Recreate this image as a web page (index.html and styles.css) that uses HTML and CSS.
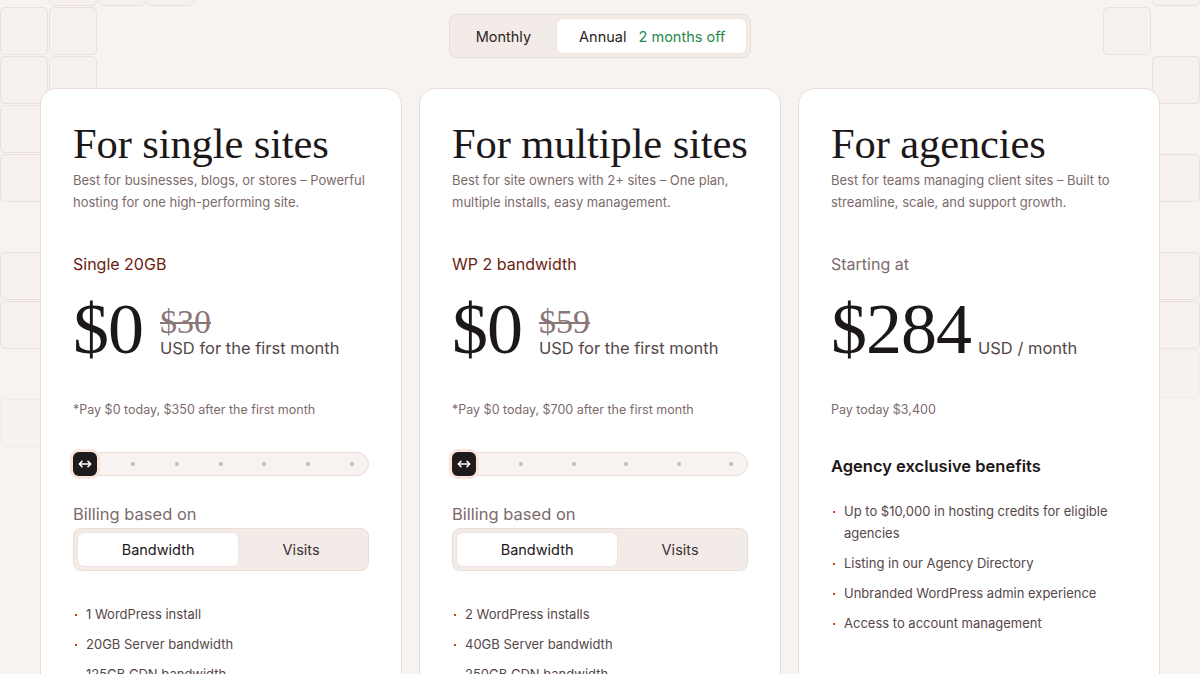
FILE: index.html
```html
<!DOCTYPE html>
<html lang="en">
<head>
<meta charset="utf-8">
<title>Pricing</title>
<link rel="stylesheet" href="styles.css">
</head>
<body>
<div class="bg-grid bg-left">
  <span class="tile" style="grid-column:2;grid-row:1"></span>
  <span class="tile" style="grid-column:3;grid-row:1"></span>
  <span class="tile" style="grid-column:4;grid-row:1"></span>
  <span class="tile" style="grid-column:1;grid-row:2"></span>
  <span class="tile" style="grid-column:2;grid-row:2"></span>
  <span class="tile" style="grid-column:1;grid-row:3"></span>
  <span class="tile" style="grid-column:2;grid-row:3"></span>
  <span class="tile" style="grid-column:1;grid-row:4"></span>
  <span class="tile" style="grid-column:1;grid-row:5"></span>
  <span class="tile" style="grid-column:1;grid-row:7"></span>
  <span class="tile" style="grid-column:1;grid-row:8"></span>
  <span class="tile faint" style="grid-column:1;grid-row:10"></span>
</div>
<div class="bg-grid bg-right">
  <span class="tile" style="grid-column:2;grid-row:1"></span>
  <span class="tile" style="grid-column:1;grid-row:2"></span>
  <span class="tile" style="grid-column:2;grid-row:3"></span>
  <span class="tile" style="grid-column:2;grid-row:5"></span>
  <span class="tile" style="grid-column:2;grid-row:7"></span>
  <span class="tile" style="grid-column:2;grid-row:8"></span>
  <span class="tile faint" style="grid-column:2;grid-row:9"></span>
</div>

<main class="page">
  <div class="period-toggle">
    <button class="period-opt">Monthly</button>
    <button class="period-opt active">Annual <span class="save">2 months off</span></button>
  </div>

  <section class="cards">
    <article class="card">
      <h2 class="card-title">For single sites</h2>
      <p class="card-desc">Best for businesses, blogs, or stores – Powerful hosting for one high-performing site.</p>
      <div class="plan-name">Single 20GB</div>
      <div class="price-row">
        <span class="price">$0</span>
        <div class="price-meta">
          <span class="old-price">$30</span>
          <span class="price-unit">USD for the first month</span>
        </div>
      </div>
      <p class="price-note">*Pay $0 today, $350 after the first month</p>
      <div class="slider">
        <span class="handle"><svg width="14" height="8" viewBox="0 0 14 8"><path d="M1.5 4h11M4 1.3L1.3 4 4 6.7M10 1.3L12.7 4 10 6.7" fill="none" stroke="#fff" stroke-width="1.6" stroke-linecap="round" stroke-linejoin="round"/></svg></span>
        <div class="dots dots-6"><i></i><i></i><i></i><i></i><i></i><i></i></div>
      </div>
      <div class="billing-label">Billing based on</div>
      <div class="seg">
        <button class="seg-opt active">Bandwidth</button>
        <button class="seg-opt">Visits</button>
      </div>
      <ul class="features">
        <li>1 WordPress install</li>
        <li>20GB Server bandwidth</li>
        <li>125GB CDN bandwidth</li>
      </ul>
    </article>

    <article class="card">
      <h2 class="card-title">For multiple sites</h2>
      <p class="card-desc">Best for site owners with 2+ sites – One plan, multiple installs, easy management.</p>
      <div class="plan-name">WP 2 bandwidth</div>
      <div class="price-row">
        <span class="price">$0</span>
        <div class="price-meta">
          <span class="old-price">$59</span>
          <span class="price-unit">USD for the first month</span>
        </div>
      </div>
      <p class="price-note">*Pay $0 today, $700 after the first month</p>
      <div class="slider">
        <span class="handle"><svg width="14" height="8" viewBox="0 0 14 8"><path d="M1.5 4h11M4 1.3L1.3 4 4 6.7M10 1.3L12.7 4 10 6.7" fill="none" stroke="#fff" stroke-width="1.6" stroke-linecap="round" stroke-linejoin="round"/></svg></span>
        <div class="dots dots-5"><i></i><i></i><i></i><i></i><i></i></div>
      </div>
      <div class="billing-label">Billing based on</div>
      <div class="seg">
        <button class="seg-opt active">Bandwidth</button>
        <button class="seg-opt">Visits</button>
      </div>
      <ul class="features">
        <li>2 WordPress installs</li>
        <li>40GB Server bandwidth</li>
        <li>250GB CDN bandwidth</li>
      </ul>
    </article>

    <article class="card">
      <h2 class="card-title">For agencies</h2>
      <p class="card-desc">Best for teams managing client sites – Built to streamline, scale, and support growth.</p>
      <div class="plan-name muted">Starting at</div>
      <div class="price-row tight">
        <span class="price">$284</span>
        <div class="price-meta">
          <span class="price-unit">USD / month</span>
        </div>
      </div>
      <p class="price-note">Pay today $3,400</p>
      <h3 class="benefits-title">Agency exclusive benefits</h3>
      <ul class="features benefits">
        <li>Up to $10,000 in hosting credits for eligible agencies</li>
        <li>Listing in our Agency Directory</li>
        <li>Unbranded WordPress admin experience</li>
        <li>Access to account management</li>
      </ul>
    </article>
  </section>
</main>
</body>
</html>
```

FILE: styles.css
```css
* { box-sizing: border-box; }

html, body {
  margin: 0;
  padding: 0;
  height: 674px;
  overflow: hidden;
}

body {
  background: #f7f3f0;
  font-family: "Inter", "Liberation Sans", sans-serif;
  color: #1c1718;
  position: relative;
}

.bg-grid {
  position: absolute;
  top: -42px;
  display: grid;
  grid-auto-rows: 48px;
  gap: 1px;
  z-index: 0;
}
.bg-left { left: 0; grid-template-columns: repeat(4, 48px); }
.bg-right { right: 0; grid-template-columns: repeat(2, 48px); }

.tile {
  display: block;
  border: 1px solid #ebe1db;
  border-radius: 5px;
  background: #f6f1ee;
}
.tile.faint { opacity: 0.45; }

.page {
  position: relative;
  z-index: 1;
  width: 1120px;
  margin: 0 auto;
  padding-top: 14px;
  display: flex;
  flex-direction: column;
  align-items: center;
}

button {
  font-family: inherit;
  border: none;
  background: none;
  cursor: pointer;
  padding: 0;
}

.period-toggle {
  display: flex;
  align-items: center;
  height: 44px;
  padding: 4px;
  background: #f3ebe7;
  border: 1px solid #eaddd6;
  border-radius: 8px;
}
.period-opt {
  height: 34px;
  font-size: 14.5px;
  color: #2a2324;
  padding: 0 26px 0 22px;
  border-radius: 6px;
}
.period-opt.active {
  background: #fff;
  padding: 0 21px 0 22px;
  box-shadow: 0 0 0 1px #efe5e0;
}
.save { color: #1f8a4a; margin-left: 8px; }

.cards {
  margin-top: 30px;
  width: 100%;
  display: grid;
  grid-template-columns: repeat(3, minmax(0, 1fr));
  gap: 17px;
}

.card {
  min-width: 0;
  background: #fff;
  border: 1px solid #eaded7;
  border-radius: 16px;
  padding: 32px 32px 40px 32px;
  min-height: 640px;
  display: flex;
  flex-direction: column;
}

.card-title {
  margin: 0;
  font-family: "Liberation Serif", "Times New Roman", serif;
  font-weight: 400;
  font-size: 42.5px;
  line-height: 46px;
  color: #1c1718;
  letter-spacing: -0.1px;
  white-space: nowrap;
}

.card-desc {
  margin: 2px 0 0;
  font-size: 13px;
  line-height: 22px;
  color: #7d6a6b;
  max-width: 300px;
}

.plan-name {
  margin-top: 39px;
  font-size: 16px;
  line-height: 24px;
  color: #6a1d10;
}
.plan-name.muted { color: #7d6a6b; }

.price-row {
  margin-top: 15px;
  display: flex;
  align-items: flex-end;
  gap: 17px;
  height: 70px;
}
.price-row.tight { gap: 7px; }
.price {
  font-family: "Liberation Serif", "Times New Roman", serif;
  font-size: 72px;
  line-height: 64px;
  color: #1c1718;
  letter-spacing: -1px;
}
.price-meta {
  display: flex;
  flex-direction: column;
  padding-bottom: 1px;
}
.old-price {
  font-family: "Liberation Serif", "Times New Roman", serif;
  font-size: 34px;
  line-height: 28px;
  color: #8a7577;
  text-decoration: line-through;
  text-decoration-thickness: 1.5px;
}
.price-unit {
  font-size: 16.5px;
  line-height: 24px;
  color: #554748;
}

.price-note {
  margin: 40px 0 0;
  font-size: 12.5px;
  line-height: 18px;
  color: #7d6a6b;
}

.slider {
  margin-top: 33px;
  position: relative;
  height: 24px;
  border: 1px solid #eaddd6;
  background: #f8f3f0;
  border-radius: 12px;
  display: flex;
  align-items: center;
}
.handle {
  position: absolute;
  left: -1px;
  top: -1px;
  width: 24px;
  height: 24px;
  background: #1f1a1b;
  border-radius: 6px;
  box-shadow: 0 0 0 3px #fbe4dc;
  display: flex;
  align-items: center;
  justify-content: center;
}
.dots {
  flex: 1;
  display: flex;
  justify-content: space-between;
  padding-right: 14px;
}
.dots-6 { padding-left: 57px; }
.dots-5 { padding-left: 66px; }
.dots i {
  display: block;
  width: 4px;
  height: 4px;
  border-radius: 50%;
  background: #cdb9b5;
}

.billing-label {
  margin-top: 27px;
  font-size: 16.5px;
  line-height: 22px;
  color: #7d6a6b;
}
.seg {
  margin-top: 3px;
  height: 43px;
  display: grid;
  grid-template-columns: 56% 1fr;
  padding: 4px;
  background: #f3ebe7;
  border: 1px solid #eaddd6;
  border-radius: 8px;
}
.seg-opt {
  font-size: 14.5px;
  color: #3a3132;
  border-radius: 6px;
}
.seg-opt.active {
  background: #fff;
  color: #1c1718;
  box-shadow: 0 0 0 1px #efe5e0;
}

.features {
  list-style: none;
  margin: 32px 0 0;
  padding: 0;
  display: flex;
  flex-direction: column;
  gap: 8px;
}
.features li {
  position: relative;
  padding-left: 13px;
  font-size: 13px;
  line-height: 22px;
  color: #554748;
}
.features li::before {
  content: "";
  position: absolute;
  left: 2px;
  top: 11px;
  width: 2px;
  height: 2px;
  background: #c8431c;
}

.benefits-title {
  margin: 35px 0 0;
  font-size: 16.5px;
  font-weight: 600;
  line-height: 24px;
  color: #1c1718;
}
.features.benefits { margin-top: 22px; }
.features.benefits li { max-width: 290px; }
```
